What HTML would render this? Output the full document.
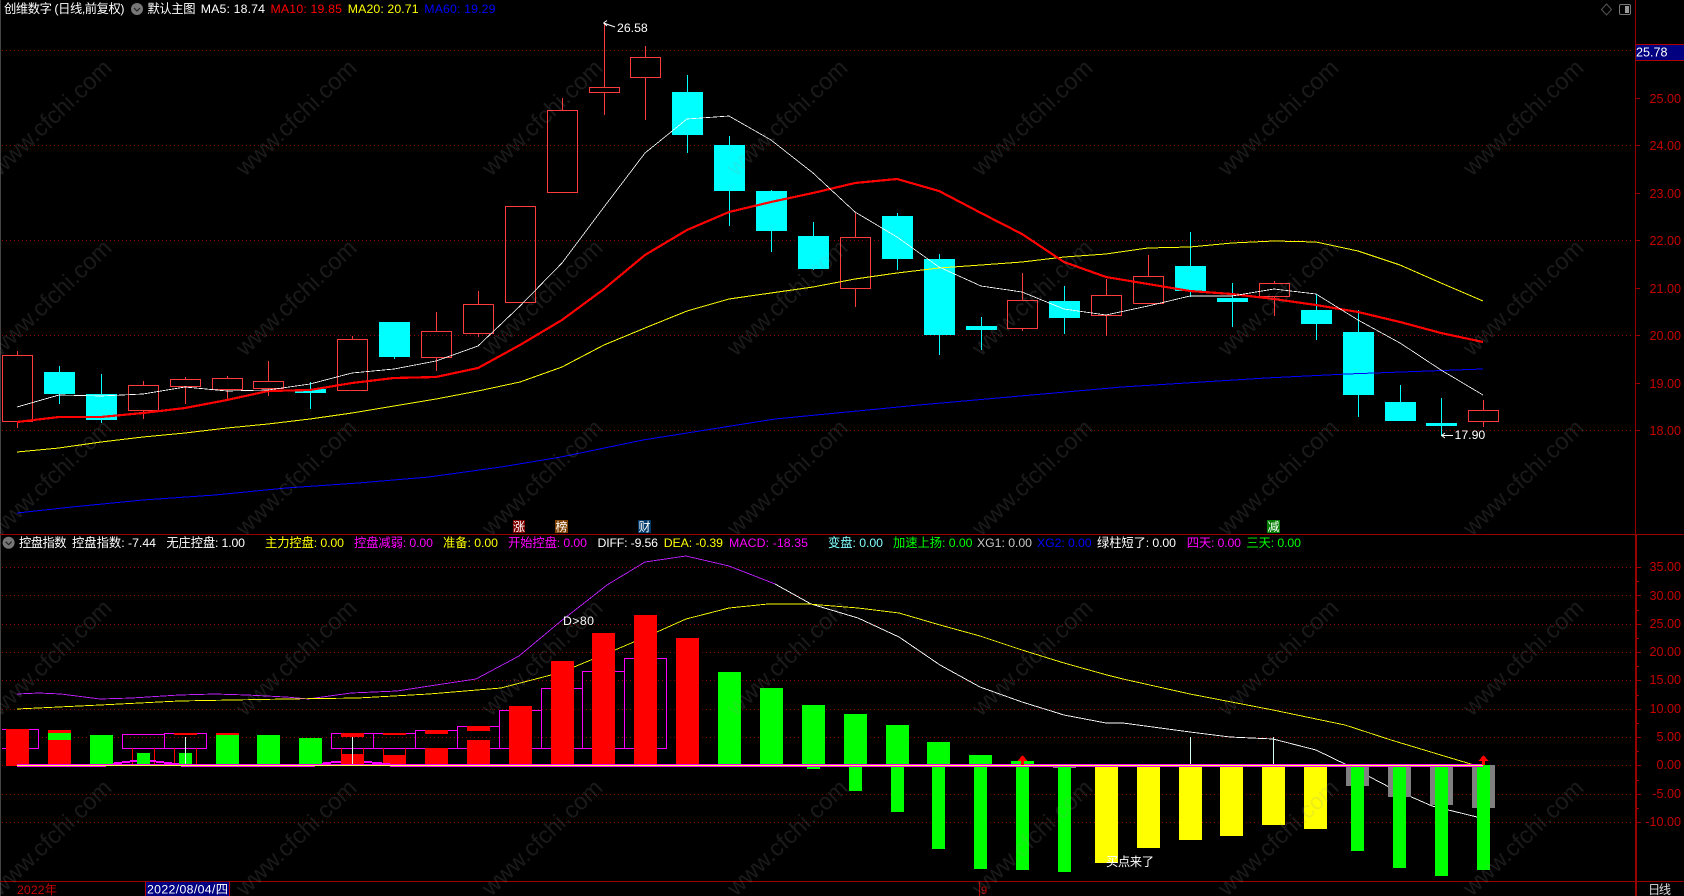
<!DOCTYPE html>
<html><head><meta charset="utf-8"><title>创维数字</title>
<style>
html,body{margin:0;padding:0;background:#000;width:1684px;height:896px;overflow:hidden}
svg{display:block}
text{font-family:"Liberation Sans","Noto Sans CJK SC",sans-serif;font-size:12.3px}
.ax{fill:#c40000;font-size:12.6px}
.wm{fill:#999;opacity:.17;font-size:23.6px}
</style></head><body>
<svg width="1684" height="896" viewBox="0 0 1684 896" xmlns="http://www.w3.org/2000/svg">
<rect width="1684" height="896" fill="#000"/>
<rect x="0" y="0" width="1" height="896" fill="#444"/>

<!-- grid -->
<g stroke="#8a0000" stroke-width="1" stroke-dasharray="1 3" shape-rendering="crispEdges">
<path d="M2 50.5H1634M2 145.5H1634M2 240.5H1634M2 335.5H1634M2 430.5H1634"/>
<path d="M2 567.5H1634M2 595.5H1634M2 624.5H1634M2 652.5H1634M2 680.5H1634M2 709.5H1634M2 737.5H1634M2 765.5H1634M2 794.5H1634M2 822.5H1634"/>
</g>

<!-- frame -->
<g fill="#990000" shape-rendering="crispEdges">
<rect x="0" y="534" width="1684" height="1"/>
<rect x="0" y="881" width="1684" height="1"/>
<rect x="1635" y="0" width="1" height="534"/>
<rect x="1635" y="534" width="2" height="362"/>
</g>
<path stroke="#990000" fill="none" shape-rendering="crispEdges" d="M1636 98.5H1640M1636 145.5H1640M1636 193.5H1640M1636 240.5H1640M1636 288.5H1640M1636 335.5H1640M1636 383.5H1640M1636 430.5H1640M1637 567.5H1641M1637 581.5H1639M1637 595.5H1641M1637 610.5H1639M1637 624.5H1641M1637 638.5H1639M1637 652.5H1641M1637 666.5H1639M1637 680.5H1641M1637 695.5H1639M1637 709.5H1641M1637 723.5H1639M1637 737.5H1641M1637 751.5H1639M1637 765.5H1641M1637 780.5H1639M1637 794.5H1641M1637 808.5H1639M1637 822.5H1641"/>

<!-- axis labels -->
<rect x="1636" y="44" width="48" height="16" fill="#000080"/>
<path d="M1636 44.5H1684M1636 60.5H1684" stroke="#b00000" shape-rendering="crispEdges"/>
<text x="1636" y="56.5" fill="#fff" style="font-size:12.6px">25.78</text>
<g class="ax" text-anchor="end">
<text class="ax" x="1681" y="103">25.00</text>
<text class="ax" x="1681" y="150">24.00</text>
<text class="ax" x="1681" y="198">23.00</text>
<text class="ax" x="1681" y="245">22.00</text>
<text class="ax" x="1681" y="293">21.00</text>
<text class="ax" x="1681" y="340">20.00</text>
<text class="ax" x="1681" y="388">19.00</text>
<text class="ax" x="1681" y="435">18.00</text>
<text class="ax" x="1681" y="571">35.00</text>
<text class="ax" x="1681" y="600">30.00</text>
<text class="ax" x="1681" y="628">25.00</text>
<text class="ax" x="1681" y="656">20.00</text>
<text class="ax" x="1681" y="684">15.00</text>
<text class="ax" x="1681" y="713">10.00</text>
<text class="ax" x="1681" y="741">5.00</text>
<text class="ax" x="1681" y="769">0.00</text>
<text class="ax" x="1681" y="798">-5.00</text>
<text class="ax" x="1681" y="826">-10.00</text>
</g>

<!-- red candles -->
<path fill="none" stroke="#ff3c3c" stroke-width="1" shape-rendering="crispEdges" d="
M17.5 351V355M17.5 421V428M2.5 355.5H32.5V421.5H2.5Z
M143.5 381V385M143.5 410V419M128.5 385.5H158.5V410.5H128.5Z
M185.5 377V379M185.5 386V404M170.5 379.5H200.5V386.5H170.5Z
M227.5 376V378M227.5 389V399M212.5 378.5H242.5V389.5H212.5Z
M268.5 361V381M268.5 388V396M253.5 381.5H283.5V388.5H253.5Z
M352.5 336V339M337.5 339.5H367.5V390.5H337.5Z
M436.5 312V331M436.5 357V371M421.5 331.5H451.5V357.5H421.5Z
M478.5 291V304M478.5 333V337M463.5 304.5H493.5V333.5H463.5Z
M505.5 206.5H535.5V302.5H505.5Z
M562.5 98V110M547.5 110.5H577.5V192.5H547.5Z
M604.5 23V87M604.5 92V115M589.5 87.5H619.5V92.5H589.5Z
M645.5 46V57M645.5 77V120M630.5 57.5H660.5V77.5H630.5Z
M855.5 213V237M855.5 288V307M840.5 237.5H870.5V288.5H840.5Z
M1022.5 273V300M1022.5 328V331M1007.5 300.5H1037.5V328.5H1007.5Z
M1106.5 279V295M1106.5 315V336M1091.5 295.5H1121.5V315.5H1091.5Z
M1148.5 255V276M1133.5 276.5H1163.5V303.5H1133.5Z
M1274.5 281V283M1274.5 296V316M1259.5 283.5H1289.5V296.5H1259.5Z
M1483.5 400V410M1483.5 421V427M1468.5 410.5H1498.5V421.5H1468.5Z"/>

<!-- cyan candles -->
<path fill="none" stroke="#00ffff" stroke-width="1" shape-rendering="crispEdges" d="M59.5 366V404M101.5 374V423M310.5 382V409M394.5 357V359M687.5 75V153M729.5 136V226M771.5 190V252M813.5 222V270M897.5 213V270M939.5 254V355M981.5 317V350M1064.5 286V334M1190.5 232V297M1232.5 283V327M1316.5 294V340M1358.5 310V417M1400.5 385V421M1441.5 398V436"/>
<g fill="#00ffff" shape-rendering="crispEdges">
<rect x="44" y="372" width="31" height="22"/>
<rect x="86" y="394" width="31" height="26"/>
<rect x="295" y="389" width="31" height="4"/>
<rect x="379" y="322" width="31" height="35"/>
<rect x="672" y="92" width="31" height="43"/>
<rect x="714" y="145" width="31" height="46"/>
<rect x="756" y="191" width="31" height="40"/>
<rect x="798" y="236" width="31" height="33"/>
<rect x="882" y="216" width="31" height="43"/>
<rect x="924" y="259" width="31" height="76"/>
<rect x="966" y="326" width="31" height="4"/>
<rect x="1049" y="301" width="31" height="17"/>
<rect x="1175" y="266" width="31" height="25"/>
<rect x="1217" y="298" width="31" height="4"/>
<rect x="1301" y="310" width="31" height="14"/>
<rect x="1343" y="332" width="31" height="63"/>
<rect x="1385" y="402" width="31" height="19"/>
<rect x="1426" y="423" width="31" height="3"/>
</g>

<!-- MA lines -->
<g fill="none" shape-rendering="crispEdges">
<polyline stroke="#0000ff" stroke-width="1" points="17,513 72,507 143,500 215,495 286,488 358,483 429,477 501,467 561,457 643,440 775,419 919,405 1122,387 1266,378 1347,374 1483,369"/>
<polyline stroke="#ffff00" stroke-width="1" points="17,452 59,448 101,442 143,437 185,433 227,428 268,424 310,419 352,413 394,406 436,399 478,391 520,382 562,367 604,345 645,328 687,311 729,299 771,293 813,287 855,279 897,273 939,268 981,265 1022,262 1064,257 1106,254 1148,248 1190,247 1232,243 1274,241 1316,242 1358,251 1400,265 1441,283 1483,301"/>
<polyline stroke="#ff0000" stroke-width="2.2" points="17,422 59,417 101,417 143,413 185,408 227,400 268,391 310,390 352,383 394,378 436,377 478,368 520,345 562,320 604,289 645,255 687,230 729,212 771,202 813,193 855,183 897,179 939,191 981,213 1022,234 1064,262 1106,277 1148,284 1190,291 1232,294 1274,299 1316,305 1358,312 1400,322 1441,333 1483,342"/>
<polyline stroke="#ffffff" stroke-width="0.8" points="17,407 59,395 101,396 143,394 185,387 227,391 268,390 310,384 352,373 394,369 436,361 478,346 520,306 562,263 604,207 645,153 687,119 729,116 771,140 813,173 855,212 897,237 939,267 981,286 1022,292 1064,309 1106,315 1148,306 1190,296 1232,296 1274,289 1316,294 1358,320 1400,343 1441,370 1483,395"/>
</g>

<!-- high/low labels -->
<path fill="none" stroke="#fff" stroke-width="1" d="M603.5 23L615 27M603.5 23L607 20.5M603.5 23L607 26"/>
<text x="617" y="32" fill="#fff">26.58</text>
<path fill="none" stroke="#fff" stroke-width="1" d="M1441.5 435.5H1453M1441.5 435.5L1445 433M1441.5 435.5L1445 438"/>
<text x="1454.5" y="439" fill="#fff">17.90</text>

<!-- markers -->
<g shape-rendering="crispEdges">
<rect x="513" y="520" width="12" height="13" fill="#7f0000"/>
<rect x="555" y="520" width="13" height="13" fill="#7f4000"/>
<rect x="638" y="520" width="13" height="13" fill="#003a6a"/>
<rect x="1267" y="520" width="13" height="13" fill="#007f00"/>
</g>
<g fill="#fff">
<text x="513" y="531" style="font-size:12px">涨</text>
<text x="555.5" y="531" style="font-size:12px">榜</text>
<text x="638.5" y="531" style="font-size:12px">财</text>
<text x="1267.5" y="531" style="font-size:12px">减</text>
</g>

<!-- header -->
<text x="4" y="13" fill="#fff" textLength="120.5">创维数字 (日线,前复权)</text>
<circle cx="137" cy="9" r="6" fill="#777"/>
<path d="M134 8l3 3 3-3" fill="none" stroke="#222" stroke-width="1.2"/>
<text x="147.5" y="13" fill="#fff" textLength="48">默认主图</text>
<text x="200.7" y="13" fill="#fff" textLength="64.3">MA5: 18.74</text>
<text x="270.5" y="13" fill="#ff0000" textLength="71.5">MA10: 19.85</text>
<text x="347.8" y="13" fill="#ffff00" textLength="70.8">MA20: 20.71</text>
<text x="424.3" y="13" fill="#0000ff" textLength="71.2">MA60: 19.29</text>
<path d="M1606.5 4l5 5.5-5 5.5-5-5.5z" fill="none" stroke="#555"/>
<rect x="1619.5" y="4.5" width="11" height="10" rx="1.5" fill="none" stroke="#777"/>
<rect x="1625" y="6" width="4" height="7" fill="#999"/>

<!-- lower legend -->
<circle cx="8.6" cy="542.7" r="6" fill="#777"/>
<path d="M5.6 541.7l3 3 3-3" fill="none" stroke="#222" stroke-width="1.2"/>
<g>
<text x="19" y="547" fill="#fff" textLength="47.5">控盘指数</text>
<text x="72" y="547" fill="#fff" textLength="84">控盘指数: -7.44</text>
<text x="166.4" y="547" fill="#fff" textLength="78.6">无庄控盘: 1.00</text>
<text x="265" y="547" fill="#ffff00" textLength="79">主力控盘: 0.00</text>
<text x="354" y="547" fill="#ff00ff" textLength="79">控盘减弱: 0.00</text>
<text x="443" y="547" fill="#ffff00" textLength="55">准备: 0.00</text>
<text x="508" y="547" fill="#ff00ff" textLength="79">开始控盘: 0.00</text>
<text x="597.5" y="547" fill="#fff" textLength="60.5">DIFF: -9.56</text>
<text x="663.7" y="547" fill="#ffff00" textLength="59.3">DEA: -0.39</text>
<text x="729" y="547" fill="#ff00ff" textLength="79">MACD: -18.35</text>
<text x="828" y="547" fill="#80ffff" textLength="55">变盘: 0.00</text>
<text x="893" y="547" fill="#00ff00" textLength="79.5">加速上扬: 0.00</text>
<text x="977" y="547" fill="#c8c8c8" textLength="55">XG1: 0.00</text>
<text x="1037" y="547" fill="#0000ff" textLength="54.6">XG2: 0.00</text>
<text x="1097" y="547" fill="#fff" textLength="79">绿柱短了: 0.00</text>
<text x="1186.7" y="547" fill="#ff00ff" textLength="54.3">四天: 0.00</text>
<text x="1246.4" y="547" fill="#00ff00" textLength="54.6">三天: 0.00</text>
</g>

<!-- lower lines -->
<g fill="none" stroke-width="0.9" shape-rendering="crispEdges">
<polyline stroke="#c020ff" points="17,694 39,693 61,694 100,699 132,698 179,695 215,694 247,695 286,697 308,699 351,693 397,691 436,685 476,679 519,656 561,621 588,600 607,585 645,562 686,556 729,566 770,582 775,584"/>
<polyline stroke="#ffffff" points="775,584 802,599 811,604 858,618 899,637 940,665 980,687 1022,702 1064,715 1106,723 1123,723 1190,732 1230,737 1273,739 1316,750 1347,765 1391,788 1432,806 1477,817"/>
<polyline stroke="#ffff00" points="17,709 100,705 179,701 286,699 358,698 429,694 501,688 551,675 574,667 615,650 657,632 686,619 729,608 768,604 808,604 858,608 899,613 940,625 980,636 1022,650 1064,663 1107,675 1123,679 1190,694 1273,710 1345,725 1391,740 1474,765"/>
</g>

<!-- magenta hollow boxes -->
<path fill="none" stroke="#ff00ff" stroke-width="1" shape-rendering="crispEdges" d="M2 729.5H38.5V748.5H2M122.5 734.5H164.5V748.5H122.5ZM164.5 733.5H206.5V748.5H164.5ZM331.5 733.5H373.5V748.5H331.5ZM373.5 733.5H415.5V748.5H373.5ZM415.5 730.5H457.5V748.5H415.5ZM457.5 726.5H499.5V748.5H457.5ZM499.5 710.5H541.5V748.5H499.5ZM541.5 688.5H582.5V748.5H541.5ZM582.5 671.5H624.5V748.5H582.5ZM624.5 658.5H666.5V748.5H624.5Z"/>
<path fill="none" stroke="#ff0000" stroke-width="1" shape-rendering="crispEdges" d="M132.5 748V765M154.5 748V765M174.5 748V765M196.5 748V765M341.5 748V754M363.5 748V754M383.5 748V755M405.5 748V755"/>

<g shape-rendering="crispEdges">
<!-- gray -->
<g fill="#808080">
<rect x="1346" y="765" width="23" height="21"/>
<rect x="1388" y="765" width="23" height="32"/>
<rect x="1430" y="765" width="23" height="40"/>
<rect x="1472" y="765" width="23" height="43"/>
<rect x="1053" y="765" width="23" height="3"/>
</g>
<!-- red -->
<g fill="#ff0000">
<rect x="6" y="729" width="23" height="37"/>
<rect x="48" y="730" width="23" height="36"/>
<rect x="174" y="733" width="23" height="2"/>
<rect x="216" y="733" width="23" height="2"/>
<rect x="341" y="733" width="23" height="4"/>
<rect x="341" y="754" width="23" height="11"/>
<rect x="383" y="733" width="23" height="2"/>
<rect x="383" y="755" width="23" height="10"/>
<rect x="425" y="730" width="23" height="4"/>
<rect x="425" y="748" width="23" height="17"/>
<rect x="467" y="726" width="23" height="5"/>
<rect x="467" y="740" width="23" height="25"/>
<rect x="509" y="706" width="23" height="59"/>
<rect x="551" y="661" width="23" height="104"/>
<rect x="592" y="633" width="23" height="132"/>
<rect x="634" y="615" width="23" height="150"/>
<rect x="676" y="638" width="23" height="127"/>
</g>
<!-- magenta stepped humps (under the small green bars) -->
<g fill="#ff00ff">
<rect x="108" y="763" width="6" height="2"/><rect x="114" y="762" width="8" height="2"/><rect x="122" y="761" width="8" height="2"/><rect x="130" y="760" width="8" height="2"/><rect x="149" y="760" width="7" height="2"/><rect x="156" y="761" width="8" height="2"/><rect x="164" y="762" width="8" height="2"/><rect x="172" y="763" width="8" height="2"/>
<rect x="315" y="763" width="8" height="2"/><rect x="323" y="762" width="8" height="2"/><rect x="331" y="761" width="10" height="2"/><rect x="364" y="761" width="8" height="2"/><rect x="372" y="762" width="10" height="2"/><rect x="382" y="763" width="8" height="2"/>
</g>
<!-- green -->
<g fill="#00ff00">
<rect x="48" y="733" width="23" height="7"/>
<rect x="90" y="735" width="23" height="30"/>
<rect x="137" y="753" width="13" height="12"/>
<rect x="179" y="753" width="13" height="12"/>
<rect x="216" y="735" width="23" height="30"/>
<rect x="257" y="735" width="23" height="30"/>
<rect x="299" y="738" width="23" height="26"/>
<rect x="718" y="672" width="23" height="92"/>
<rect x="723" y="764" width="13" height="2"/>
<rect x="760" y="688" width="23" height="76"/>
<rect x="765" y="764" width="13" height="2"/>
<rect x="802" y="705" width="23" height="59"/>
<rect x="807" y="764" width="13" height="5"/>
<rect x="844" y="714" width="23" height="50"/>
<rect x="849" y="764" width="13" height="27"/>
<rect x="886" y="725" width="23" height="39"/>
<rect x="891" y="764" width="13" height="48"/>
<rect x="927" y="742" width="23" height="22"/>
<rect x="932" y="764" width="13" height="85"/>
<rect x="969" y="755" width="23" height="9"/>
<rect x="974" y="764" width="13" height="105"/>
<rect x="1011" y="761" width="23" height="3"/>
<rect x="1016" y="764" width="13" height="106"/>
<rect x="1058" y="764" width="13" height="108"/>
<rect x="1351" y="765" width="13" height="86"/>
<rect x="1393" y="765" width="13" height="103"/>
<rect x="1435" y="765" width="13" height="111"/>
<rect x="1477" y="765" width="13" height="105"/>
</g>
<!-- yellow -->
<g fill="#ffff00">
<rect x="1095" y="765" width="23" height="98"/>
<rect x="1137" y="765" width="23" height="83"/>
<rect x="1179" y="765" width="23" height="75"/>
<rect x="1220" y="765" width="23" height="71"/>
<rect x="1262" y="765" width="23" height="60"/>
<rect x="1304" y="765" width="23" height="64"/>
</g>
<!-- thin white -->
<path stroke="#d8fff0" fill="none" d="M185.5 737V765M352.5 737V765M1190.5 737V765M1273.5 737V765"/>
<!-- zero line: magenta / yellow / magenta rows -->
<rect x="17" y="764" width="1466" height="1" fill="#ff00ff"/>
<rect x="17" y="766" width="89" height="1" fill="#ff00ff"/>
<rect x="181" y="766" width="134" height="1" fill="#ff00ff"/>
<rect x="390" y="766" width="1093" height="1" fill="#ff00ff"/>
<rect x="17" y="765" width="1466" height="1" fill="#ffff40"/>
</g>

<!-- arrows -->
<path fill="#ff0000" shape-rendering="crispEdges" d="M1022.5 755l5 6h-3.5v4h-3v-4h-3.5zM1483.5 755l5 6h-3.5v4h-3v-4h-3.5z"/>

<text x="563" y="625" fill="#fff" textLength="31">D&gt;80</text>
<text x="1106" y="866" fill="#fff" textLength="48">买点来了</text>

<!-- bottom bar -->
<text x="17" y="894" fill="#c40000" textLength="40">2022年</text>
<rect x="146" y="882" width="83" height="14" fill="#000080"/>
<path d="M145.5 882V896M229.5 882V896" stroke="#b00000" shape-rendering="crispEdges"/>
<text x="147" y="893.5" fill="#fff" textLength="81">2022/08/04/四</text>
<path d="M979.5 882V896" stroke="#b00000" shape-rendering="crispEdges"/>
<text x="981" y="894" fill="#c40000" style="font-size:11px">9</text>
<text x="1648" y="894" fill="#ddd" textLength="23">日线</text>

<!-- watermark -->
<g>
<text class="wm" transform="translate(0,177) rotate(-43.5)">www.cfchi.com</text>
<text class="wm" transform="translate(245,177) rotate(-43.5)">www.cfchi.com</text>
<text class="wm" transform="translate(491,177) rotate(-43.5)">www.cfchi.com</text>
<text class="wm" transform="translate(736,177) rotate(-43.5)">www.cfchi.com</text>
<text class="wm" transform="translate(981,177) rotate(-43.5)">www.cfchi.com</text>
<text class="wm" transform="translate(1227,177) rotate(-43.5)">www.cfchi.com</text>
<text class="wm" transform="translate(1472,177) rotate(-43.5)">www.cfchi.com</text>
<text class="wm" transform="translate(0,357) rotate(-43.5)">www.cfchi.com</text>
<text class="wm" transform="translate(245,357) rotate(-43.5)">www.cfchi.com</text>
<text class="wm" transform="translate(491,357) rotate(-43.5)">www.cfchi.com</text>
<text class="wm" transform="translate(736,357) rotate(-43.5)">www.cfchi.com</text>
<text class="wm" transform="translate(981,357) rotate(-43.5)">www.cfchi.com</text>
<text class="wm" transform="translate(1227,357) rotate(-43.5)">www.cfchi.com</text>
<text class="wm" transform="translate(1472,357) rotate(-43.5)">www.cfchi.com</text>
<text class="wm" transform="translate(0,537) rotate(-43.5)">www.cfchi.com</text>
<text class="wm" transform="translate(245,537) rotate(-43.5)">www.cfchi.com</text>
<text class="wm" transform="translate(491,537) rotate(-43.5)">www.cfchi.com</text>
<text class="wm" transform="translate(736,537) rotate(-43.5)">www.cfchi.com</text>
<text class="wm" transform="translate(981,537) rotate(-43.5)">www.cfchi.com</text>
<text class="wm" transform="translate(1227,537) rotate(-43.5)">www.cfchi.com</text>
<text class="wm" transform="translate(1472,537) rotate(-43.5)">www.cfchi.com</text>
<text class="wm" transform="translate(0,717) rotate(-43.5)">www.cfchi.com</text>
<text class="wm" transform="translate(245,717) rotate(-43.5)">www.cfchi.com</text>
<text class="wm" transform="translate(491,717) rotate(-43.5)">www.cfchi.com</text>
<text class="wm" transform="translate(736,717) rotate(-43.5)">www.cfchi.com</text>
<text class="wm" transform="translate(981,717) rotate(-43.5)">www.cfchi.com</text>
<text class="wm" transform="translate(1227,717) rotate(-43.5)">www.cfchi.com</text>
<text class="wm" transform="translate(1472,717) rotate(-43.5)">www.cfchi.com</text>
<text class="wm" transform="translate(0,897) rotate(-43.5)">www.cfchi.com</text>
<text class="wm" transform="translate(245,897) rotate(-43.5)">www.cfchi.com</text>
<text class="wm" transform="translate(491,897) rotate(-43.5)">www.cfchi.com</text>
<text class="wm" transform="translate(736,897) rotate(-43.5)">www.cfchi.com</text>
<text class="wm" transform="translate(981,897) rotate(-43.5)">www.cfchi.com</text>
<text class="wm" transform="translate(1227,897) rotate(-43.5)">www.cfchi.com</text>
<text class="wm" transform="translate(1472,897) rotate(-43.5)">www.cfchi.com</text>
</g>
</svg>
</body></html>
